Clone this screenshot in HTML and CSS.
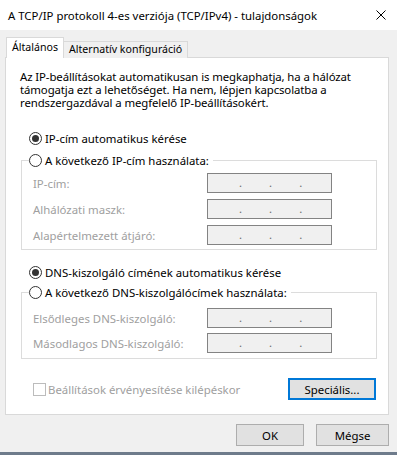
FILE: index.html
```html
<!DOCTYPE html>
<html lang="hu">
<head>
<meta charset="utf-8">
<title>TCP/IPv4 tulajdonságok</title>
<link rel="stylesheet" href="styles.css">
</head>
<body>
<div class="titlebar">
  <span class="title">A TCP/IP protokoll 4-es verziója (TCP/IPv4) - tulajdonságok</span>
  <svg class="close" width="10" height="10" viewBox="0 0 10 10"><path d="M0.5 0.5 L9.5 9.5 M9.5 0.5 L0.5 9.5" stroke="#000" stroke-width="1"/></svg>
</div>
<div class="main">
  <div class="tabs">
    <div class="tab active">Általános</div>
    <div class="tab">Alternatív konfiguráció</div>
  </div>
  <div class="panel">
    <p class="intro">Az IP-beállításokat automatikusan is megkaphatja, ha a hálózat<br>támogatja ezt a lehetőséget. Ha nem, lépjen kapcsolatba a<br>rendszergazdával a megfelelő IP-beállításokért.</p>

    <div class="radio-row first"><span class="radio checked"></span><span>IP-cím automatikus kérése</span></div>
    <fieldset class="group ip-group">
      <legend class="radio-row"><span class="radio"></span><span>A következő IP-cím használata:</span></legend>
      <div class="grid ip-grid">
        <span class="lbl">IP-cím:</span><span class="ipfield"><i>.</i><i>.</i><i>.</i></span>
        <span class="lbl">Alhálózati maszk:</span><span class="ipfield"><i>.</i><i>.</i><i>.</i></span>
        <span class="lbl">Alapértelmezett átjáró:</span><span class="ipfield"><i>.</i><i>.</i><i>.</i></span>
      </div>
    </fieldset>

    <div class="radio-row dns-first"><span class="radio checked"></span><span>DNS-kiszolgáló címének automatikus kérése</span></div>
    <fieldset class="group dns-group">
      <legend class="radio-row"><span class="radio"></span><span>A következő DNS-kiszolgálócímek használata:</span></legend>
      <div class="grid dns-grid">
        <span class="lbl">Elsődleges DNS-kiszolgáló:</span><span class="ipfield"><i>.</i><i>.</i><i>.</i></span>
        <span class="lbl">Másodlagos DNS-kiszolgáló:</span><span class="ipfield"><i>.</i><i>.</i><i>.</i></span>
      </div>
    </fieldset>

    <div class="check-row">
      <span class="checkbox"></span><span class="lbl">Beállítások érvényesítése kilépéskor</span>
      <button class="btn focused">Speciális...</button>
    </div>
  </div>
  <div class="footer">
    <button class="btn ok">OK</button>
    <button class="btn cancel">Mégse</button>
  </div>
</div>
<div class="frame-bottom"></div>
</body>
</html>
```
FILE: styles.css
```css
* { box-sizing: border-box; }
html, body { margin: 0; padding: 0; }
body {
  width: 397px;
  height: 455px;
  overflow: hidden;
  background: #f0f0f0;
  font-family: "Noto Sans", "Liberation Sans", sans-serif;
  font-size: 11.4px;
  color: #000;
}
.titlebar {
  height: 30px;
  background: #fff;
  display: flex;
  align-items: center;
  padding: 0 11px 0 8px;
}
.title { line-height: 15px; }
.close { margin-left: auto; }
.main {
  padding: 7px 8px 0 5px;
}
.tabs {
  display: flex;
  align-items: flex-end;
  height: 21px;
  margin: 0 0 -1px 1px;
}
.tab {
  height: 17px;
  line-height: 15px;
  padding: 0 5px;
  font-size: 10.6px;
  border: 1px solid #d9d9d9;
  border-bottom: none;
  border-left: none;
  background: #f0f0f0;
}
.tab.active {
  position: relative;
  z-index: 2;
  height: 21px;
  line-height: 19px;
  border-left: 1px solid #d9d9d9;
  background: #fff;
}
.panel {
  width: 384px;
  height: 358px;
  background: #fff;
  border: 1px solid #d9d9d9;
}
.intro {
  margin: 12px 0 0 14px;
  line-height: 13px;
  letter-spacing: -0.1px;
}
.radio-row {
  display: flex;
  align-items: center;
  height: 15px;
  line-height: 15px;
  gap: 3px;
}
.radio-row.first { margin: 22px 0 0 23px; }
.radio-row.dns-first { margin: 15px 0 0 23px; }
.radio {
  width: 13px;
  height: 13px;
  border: 1px solid #333;
  border-radius: 50%;
  display: flex;
  align-items: center;
  justify-content: center;
  background: #fff;
}
.radio.checked::after {
  content: "";
  width: 7px;
  height: 7px;
  border-radius: 50%;
  background: #333;
}
.group {
  margin: 7px 0 0 15px;
  width: 356px;
  min-width: 0;
  border: 1px solid #dcdcdc;
  padding: 5px 0 4px 7px;
}
.group legend {
  padding: 0 4px 0 0;
}
.dns-group {
  margin-top: 5px;
  padding: 8px 0 5px 7px;
}
.grid {
  display: grid;
  grid-template-columns: 174px 125px;
  grid-auto-rows: 20px;
  row-gap: 6px;
  margin-left: 4px;
  align-items: center;
}
.dns-grid { row-gap: 5px; }
.lbl { color: #a0a0a0; }
.ipfield {
  height: 20px;
  border: 1px solid #838383;
  background: #f0f0f0;
  display: flex;
  padding-left: 31px;
  gap: 27px;
  color: #6d6d6d;
  line-height: 18px;
}
.ipfield i { font-style: normal; }
.check-row {
  display: flex;
  align-items: center;
  height: 22px;
  margin: 19px 12px 0 27px;
  gap: 2px;
}
.checkbox {
  width: 13px;
  height: 13px;
  border: 1px solid #bcbcbc;
  background: #fff;
}
.btn {
  font-family: inherit;
  font-size: 11.4px;
  color: #000;
  background: #e1e1e1;
  border: 1px solid #adadad;
  height: 22px;
  padding: 0;
  margin: 0;
}
.btn.focused {
  margin-left: auto;
  width: 88px;
  border: 1px solid #0078d7;
  box-shadow: inset 0 0 0 1px #0078d7;
}
.footer {
  display: flex;
  justify-content: flex-end;
  margin-top: 9px;
  gap: 12px;
}
.btn.ok { width: 68px; }
.btn.cancel { width: 73px; }
.frame-bottom {
  margin-top: 6px;
  height: 3px;
  background: #6e7b8b;
}
```
